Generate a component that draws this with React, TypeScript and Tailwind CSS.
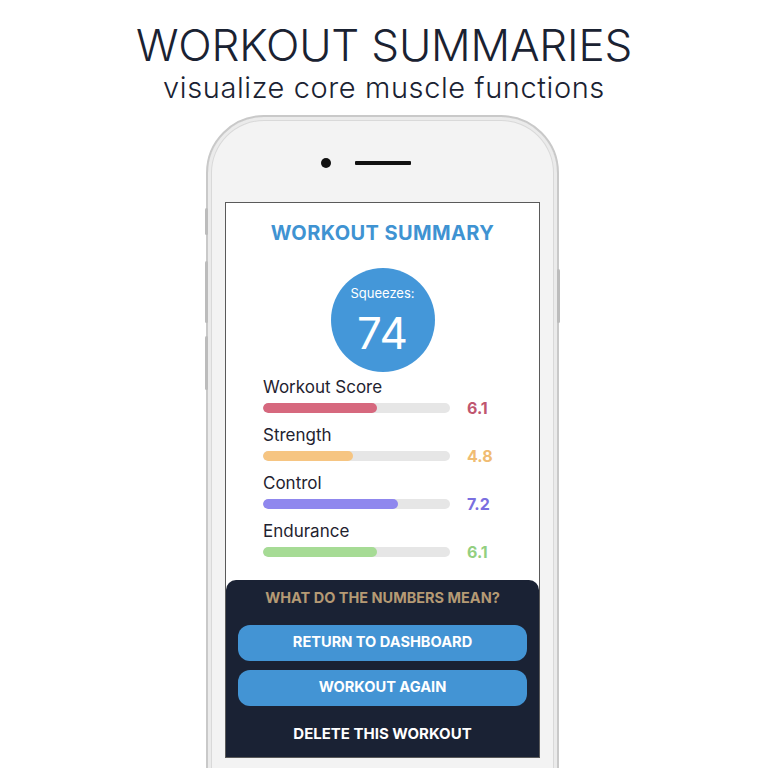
import React from "react";

type Metric = {
  label: string;
  value: number;
  bar: string;
  text: string;
};

const metrics: Metric[] = [
  { label: "Workout Score", value: 6.1, bar: "bg-[#d6687e]", text: "text-[#c0566f]" },
  { label: "Strength", value: 4.8, bar: "bg-[#f6c582]", text: "text-[#f0bc72]" },
  { label: "Control", value: 7.2, bar: "bg-[#8f87ee]", text: "text-[#7a6fe0]" },
  { label: "Endurance", value: 6.1, bar: "bg-[#a6db95]", text: "text-[#93cf80]" },
];

const MetricRow = ({ m }: { m: Metric }) => (
  <div className="flex flex-col">
    <div className="h-[21px] text-[17px] leading-[21px] text-[#1f2330]">{m.label}</div>
    <div className="flex h-[20px] items-center">
      <div className="h-[10px] w-[187px] overflow-hidden rounded-full bg-[#e6e6e6]">
        <div className={`h-full rounded-full ${m.bar}`} style={{ width: `${m.value * 10}%` }} />
      </div>
      <span className={`ml-[17px] text-[16px] font-bold ${m.text}`}>{m.value.toFixed(1)}</span>
    </div>
  </div>
);

const SideButton = ({ side, top, height }: { side: "left" | "right"; top: number; height: number }) => (
  <div
    className={`absolute w-[3px] rounded-full bg-[#bcbcbc] ${side === "left" ? "-left-[3px]" : "-right-[3px]"}`}
    style={{ top, height }}
  />
);

export default function App() {
  return (
    <div className="flex h-[768px] w-[768px] flex-col items-center overflow-hidden bg-white font-['Inter',sans-serif]">
      <h1 className="mt-[20px] text-[44px] font-light leading-[50px] tracking-[-0.2px] text-[#1a2232]">
        WORKOUT SUMMARIES
      </h1>
      <p className="mt-[1px] text-[29px] font-light leading-[34px] tracking-[0.6px] text-[#1a2232]">
        visualize core muscle functions
      </p>

      {/* phone body */}
      <div className="relative mr-[3px] mt-[10px] h-[700px] w-[353px] shrink-0 rounded-t-[58px] border-2 border-[#c9c9c9] bg-[#f3f3f3] shadow-[inset_0_0_0_3px_#ebebeb,inset_0_0_0_4px_#d9d9d9]">
        <SideButton side="left" top={91} height={27} />
        <SideButton side="left" top={144} height={62} />
        <SideButton side="left" top={219} height={54} />
        <SideButton side="right" top={152} height={54} />

        <div className="flex h-[85px] items-center justify-center pt-[6px]">
          <div className="h-[10px] w-[10px] rounded-full bg-[#111]" />
          <div className="ml-[24px] h-[4px] w-[56px] rounded-[1px] bg-[#111]" />
          <div className="w-[34px]" />
        </div>

        {/* screen */}
        <div className="ml-[17px] flex h-[556px] w-[315px] flex-col border border-[#5a5a5a] bg-white">
          <h2 className="pt-[18px] text-center text-[20px] font-bold leading-[24px] tracking-[0.4px] text-[#3f93d2]">
            WORKOUT SUMMARY
          </h2>
          <div className="mx-auto mt-[23px] flex h-[104px] w-[104px] flex-col items-center rounded-full bg-[#4497d9] text-white">
            <span className="mt-[17px] text-[13px] leading-[16px]">Squeezes:</span>
            <span className="mt-[9px] text-[44px] leading-[46px]">74</span>
          </div>
          <div className="mt-[5px] flex flex-col gap-[7px] pl-[37px]">
            {metrics.map((m) => (
              <MetricRow key={m.label} m={m} />
            ))}
          </div>

          <div className="mt-auto flex h-[177px] flex-col rounded-t-[10px] bg-[#1a2234] px-[12px]">
            <div className="pt-[8px] text-center text-[14.5px] font-bold leading-[20px] text-[#b59a74]">
              WHAT DO THE NUMBERS MEAN?
            </div>
            <button className="mt-[17px] h-[36px] rounded-[12px] bg-[#4394d4] text-[14.6px] font-bold text-white">
              RETURN TO DASHBOARD
            </button>
            <button className="mt-[9px] h-[36px] rounded-[12px] bg-[#4394d4] text-[14.6px] font-bold text-white">
              WORKOUT AGAIN
            </button>
            <div className="mt-[18px] text-center text-[15px] font-bold leading-[20px] text-white">
              DELETE THIS WORKOUT
            </div>
          </div>
        </div>
      </div>
    </div>
  );
}
